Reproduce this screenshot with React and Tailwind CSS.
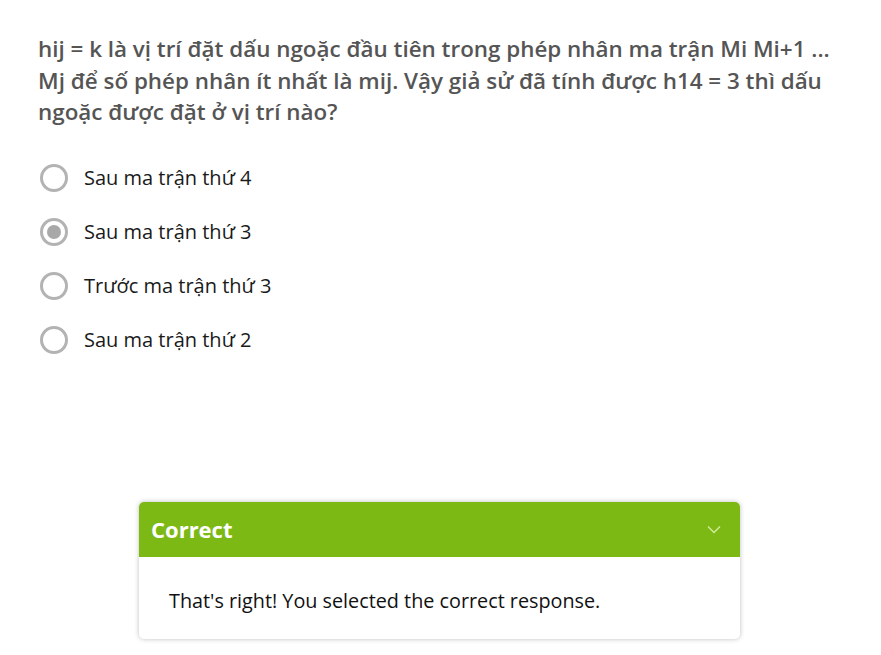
import React, { useState } from 'react';

const options = [
  'Sau ma trận thứ 4',
  'Sau ma trận thứ 3',
  'Trước ma trận thứ 3',
  'Sau ma trận thứ 2',
];

export default function App() {
  const [selected, setSelected] = useState(1);

  return (
    <div
      className="w-[881px] h-[655px] bg-white overflow-hidden"
      style={{ fontFamily: '"Open Sans", sans-serif' }}
    >
      <div className="pl-[38px] pt-[33px] w-[850px]">
        <p className="text-[22.4px] leading-[31.5px] font-semibold text-[#555555]">
          hij = k là vị trí đặt dấu ngoặc đầu tiên trong phép nhân ma trận Mi Mi+1 ... Mj để số phép nhân ít nhất là mij. Vậy giả sử đã tính được h14 = 3 thì dấu ngoặc được đặt ở vị trí nào?
        </p>

        <div className="mt-[23px] flex flex-col">
          {options.map((opt, i) => (
            <label
              key={opt}
              onClick={() => setSelected(i)}
              className="flex items-center h-[54px] cursor-pointer"
            >
              <span className="ml-[2px] w-[28px] h-[28px] rounded-full border-[3px] border-[#b3b3b3] flex items-center justify-center">
                {selected === i && <span className="w-[14px] h-[14px] rounded-full bg-[#a8a8a8]" />}
              </span>
              <span className="ml-[16px] text-[20px] text-[#1a1a1a]">{opt}</span>
            </label>
          ))}
        </div>
      </div>

      <div className="mt-[135px] ml-[139px] w-[601px] rounded-[5px] bg-white shadow-[0_0_5px_rgba(0,0,0,0.25)] overflow-hidden">
        <div className="h-[55px] bg-[#7db915] flex items-center justify-between pl-[12px] pr-[19px]">
          <span className="text-[22px] font-bold text-white">Correct</span>
          <svg width="14" height="9" viewBox="0 0 14 9" fill="none">
            <path d="M1 1.5 L7 7.5 L13 1.5" stroke="#d6ec9f" strokeWidth="1.3" />
          </svg>
        </div>
        <div className="h-[82px] flex items-center pl-[30px] pt-[6px]">
          <span className="text-[19.8px] text-[#111111]">That's right! You selected the correct response.</span>
        </div>
      </div>
    </div>
  );
}
